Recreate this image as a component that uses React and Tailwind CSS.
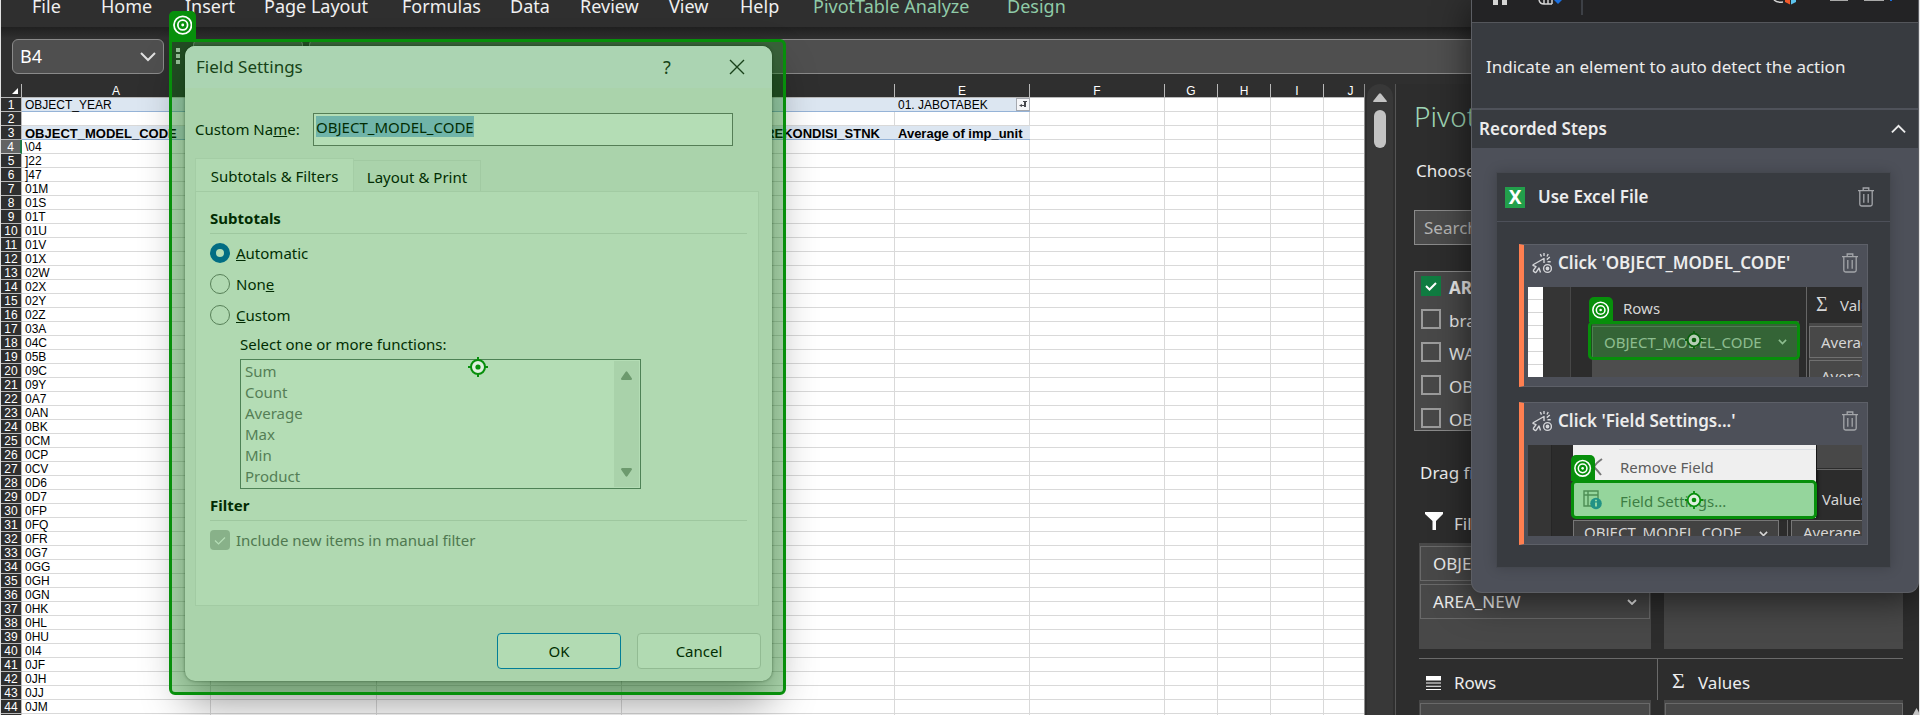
import React from "react";

const tabs = [
  ["File", false],
  ["Home", false],
  ["Insert", false],
  ["Page Layout", false],
  ["Formulas", false],
  ["Data", false],
  ["Review", false],
  ["View", false],
  ["Help", false],
  ["PivotTable Analyze", true],
  ["Design", true],
];

const codes = [
  "\\04", "]22", "]47", "01M", "01S", "01T", "01U", "01V", "01X", "02W", "02X", "02Y", "02Z",
  "03A", "04C", "05B", "09C", "09Y", "0A7", "0AN", "0BK", "0CM", "0CP", "0CV", "0D6", "0D7",
  "0FP", "0FQ", "0FR", "0G7", "0GG", "0GH", "0GN", "0HK", "0HL", "0HU", "0I4", "0JF", "0JH",
  "0JJ", "0JM", "0JN",
];

const functionNames = ["Sum", "Count", "Average", "Max", "Min", "Product"];
const columns = ["A", "B", "C", "D", "E", "F", "G", "H", "I", "J"];

function Chevron({ className, up }) {
  return (
    <svg className={className} viewBox="0 0 16 10" fill="none" stroke="currentColor" strokeWidth="2">
      <path d={up ? "M1 9 8 2l7 7" : "M1 1l7 7 7-7"} />
    </svg>
  );
}

function SmallChevron({ className }) {
  return (
    <svg className={className} viewBox="0 0 10 6" fill="none" stroke="currentColor" strokeWidth="1.8">
      <path d="m1 1 4 4 4-4" />
    </svg>
  );
}

function Badge({ className }) {
  return (
    <div className={"flex items-center justify-center bg-[#078f0b] " + className}>
      <svg viewBox="0 0 20 20" className="size-[72%]" fill="none" stroke="#fff" strokeWidth="1.8">
        <circle cx="10" cy="10" r="9" />
        <circle cx="10" cy="10" r="5" />
        <circle cx="10" cy="10" r="1.5" fill="#fff" stroke="none" />
      </svg>
    </div>
  );
}

function Target({ className, ring = "#078f0b", fill = "#dff0df" }) {
  return (
    <svg viewBox="0 0 20 20" className={className}>
      <circle cx="10" cy="10" r="7" fill={fill} stroke={ring} strokeWidth="2" />
      <path d="M10 0v3M10 17v3M0 10h3M17 10h3" stroke={ring} strokeWidth="2" />
      <circle cx="10" cy="10" r="2.6" fill={ring} />
    </svg>
  );
}

function Trash() {
  return (
    <svg viewBox="0 0 16 20" className="h-5 w-4" fill="none" stroke="#a3a5a9" strokeWidth="1.3">
      <path d="M0 3.7h16M5.2 3.5V1h5.6v2.5M1.8 3.8v13.4q0 1.8 1.8 1.8h8.8q1.8 0 1.8-1.8V3.8M5.8 7v8.8M10.2 7v8.8" />
    </svg>
  );
}

function ClickIcon() {
  return (
    <svg viewBox="0 0 20 22" className="h-[22px] w-5 shrink-0" fill="none" stroke="#d4d5d8" strokeWidth="1.4">
      <path d="M12 11V6.500L1.500 12.500q-1 .8 0 1.200l2.500 1-2.500 3.500q-.4 1 .5 1.500l1 .6q.8.4 1.400-.5L7 16l1.500 4.500" strokeLinejoin="round" />
      <path d="M12 1v3M8.300 2l1.200 2.600M16.200 2 15 4.500M14.800 7.600l3-2.600M15.500 9.800h3.200" />
      <circle cx="15.500" cy="16.500" r="3.900" />
      <circle cx="15.500" cy="16.500" r="1.200" fill="#d4d5d8" />
    </svg>
  );
}

function Sheet() {
  const line = "border-r border-b border-[#d9d9d9] p-0 pt-[2px]";
  const pivot = "border-b border-[#95b3d7] bg-[#dce6f1] p-0 pt-[2px]";
  const head = (n) =>
    n === 4
      ? "h-[14px] border-b border-r-2 border-b-[#c6c6c6] border-r-[#1d7a45] bg-[#636363] p-0 pt-[2px] text-center text-white font-normal"
      : "h-[14px] border-b border-r border-[#b9b9b9] bg-[#2f2f2f] p-0 pt-[2px] text-center text-white font-normal";
  const rest = ["F", "G", "H", "I", "J"].map((c) => <td key={c} className={line} />);
  return (
    <table className="w-[1377px] table-fixed border-separate border-spacing-0 bg-white text-left font-['Liberation_Sans'] text-[12px] leading-[11px] whitespace-nowrap text-black">
      <colgroup>
        <col className="w-[21px]" />
        <col className="w-[189px]" />
        <col className="w-[166px]" />
        <col className="w-[245px]" />
        <col className="w-[273px]" />
        <col className="w-[135px]" />
        <col className="w-[135px]" />
        <col className="w-[53px]" />
        <col className="w-[53px]" />
        <col className="w-[53px]" />
        <col className="w-[54px]" />
      </colgroup>
      <thead>
        <tr className="bg-[#2f2f2f] text-white">
          <th className="h-[14px] border-r border-b border-[#b9b9b9] p-0">
            <svg viewBox="0 0 6 6" className="ml-auto mr-[3px] size-[6px]">
              <path d="M6 0v6H0z" fill="#fff" />
            </svg>
          </th>
          {columns.map((c) => (
            <th key={c} className="h-[14px] border-r border-b border-[#b9b9b9] p-0 pt-[2px] text-center font-normal">
              {c}
            </th>
          ))}
        </tr>
      </thead>
      <tbody>
        <tr>
          <th className={head(1)}>1</th>
          <td className={pivot + " pl-[3px]"}>OBJECT_YEAR</td>
          <td className={pivot} />
          <td className={pivot} />
          <td className={pivot} />
          <td className="border-b border-[#95b3d7] bg-[#dce6f1] p-0">
            <div className="flex h-[13px] items-center justify-between pl-[3px]">
              <span className="pt-[2px]">01. JABOTABEK</span>
              <button aria-label="Filter" className="flex h-[13px] w-[14px] items-center justify-center border border-[#a5a9b0] bg-[#f4f5f8]">
                <svg viewBox="0 0 8 7" className="h-[7px] w-2">
                  <path d="M4 0h4v1H7v5H5V5H3v1L0 4.500 3 3v1h2V1H4z" fill="#44464c" />
                </svg>
              </button>
            </div>
          </td>
          {rest}
        </tr>
        <tr>
          <th className={head(2)}>2</th>
          <td className={line} />
          <td className={line} />
          <td className={line} />
          <td className={line} />
          <td className={line} />
          {rest}
        </tr>
        <tr className="text-[13px] font-bold">
          <th className={head(3) + " text-[12px]"}>3</th>
          <td className={pivot + " overflow-visible pl-[3px]"}>OBJECT_MODEL_CODE</td>
          <td className={pivot} />
          <td className={pivot} />
          <td className={pivot + " pr-[15px] text-right"}>REKONDISI_STNK</td>
          <td className={pivot + " pl-[3px]"}>Average of imp_unit</td>
          {rest}
        </tr>
        {codes.map((code, i) => (
          <tr key={code}>
            <th className={head(i + 4)}>{i + 4}</th>
            <td className={line + " pl-[3px]"}>{code}</td>
            <td className={line} />
            <td className={line} />
            <td className={line} />
            <td className={line} />
            {rest}
          </tr>
        ))}
      </tbody>
    </table>
  );
}

function AreaItem({ children }) {
  return (
    <button className="flex h-[35px] w-full shrink-0 items-center justify-between border border-[#696969] bg-[#484848] px-3 text-left">
      {children}
      <SmallChevron className="w-[10px]" />
    </button>
  );
}

function FieldPane() {
  const fields = [
    ["AREA_NEW", true],
    ["branch", false],
    ["WAREHOUSE", false],
    ["OBJECT_YEAR", false],
    ["OBJECT_MODEL", false],
  ];
  return (
    <aside className="flex w-[524px] shrink-0 flex-col overflow-hidden border-l border-[#555] bg-[#2d2d2d] pr-4 pl-[18px] text-[17px] whitespace-nowrap text-[#ececec]">
      <h2 className="mt-[15px] text-[28px] leading-[34px] font-light text-[#9fd5b5]">PivotTable Fields</h2>
      <p className="mt-[26px] pl-[2px] leading-6">Choose fields to add to report:</p>
      <input
        aria-label="Search fields"
        placeholder="Search"
        className="mt-[27px] h-[35px] w-full shrink-0 border border-[#8a8a8a] bg-[#4b4b4b] px-[9px] placeholder:text-[#b5b5b5]"
      />
      <div className="mt-[26px] h-[160px] shrink-0 overflow-hidden border border-[#8a8a8a] bg-[#484848] pl-[6px]">
        {fields.map(([name, on]) => (
          <label key={name} className={"flex h-[33px] items-center gap-2 pb-[6px] " + (on ? "font-bold" : "")}>
            <span className="relative size-5 shrink-0">
              <input
                type="checkbox"
                defaultChecked={on}
                className="block size-5 appearance-none border-2 border-[#9b9b9b] checked:border-[#107c41] checked:bg-[#107c41]"
              />
              {on && (
                <svg viewBox="0 0 20 20" className="absolute inset-0" fill="none" stroke="#fff" strokeWidth="2">
                  <path d="m5 10 3.500 3.500L15 7" />
                </svg>
              )}
            </span>
            <span className="pt-1 leading-6">{name}</span>
          </label>
        ))}
      </div>
      <p className="mt-[30px] pl-[6px] leading-6">Drag fields between areas below:</p>
      <div className="ml-[5px] grid flex-1 grid-cols-[232px_1fr] gap-x-[13px]">
        <h3 className="mt-[27px] flex h-[31px] items-start pl-[6px] leading-6">
          <svg viewBox="0 0 18 18" className="mr-[11px] size-[18px] shrink-0">
            <path d="M0 0h18v2l-7 7v9H7.500V9L0 2z" fill="#fff" />
          </svg>
          Filters
        </h3>
        <h3 className="mt-[27px] pl-[34px] leading-6">Columns</h3>
        <div className="flex h-[106px] flex-col gap-[3px] bg-[#484848] px-[1px] pt-[3px]">
          <AreaItem>OBJECT_YEAR</AreaItem>
          <AreaItem>AREA_NEW</AreaItem>
        </div>
        <div className="bg-[#484848]" />
        <h3 className="mt-[9px] -mr-[7px] flex h-[42px] items-center border-t border-r border-[#6a6a6a] pt-[6px] pl-[7px]">
          <svg viewBox="0 0 15 14" className="mr-[13px] h-[14px] w-[15px] shrink-0" fill="#fff">
            <path d="M0 0h15v4.500H0zM0 6.500h15v1H0zM0 9.700h15v1H0zM0 13h15v1H0z" />
          </svg>
          Rows
        </h3>
        <h3 className="mt-[9px] -ml-[6px] flex h-[42px] items-center border-t border-[#6a6a6a] pt-[6px] pl-[14px]">
          <span className="w-[26px] pb-1 font-['Liberation_Serif'] text-[22px]">Σ</span>
          Values
        </h3>
        <div className="bg-[#484848] px-[1px] pt-[3px]">
          <AreaItem>OBJECT_MODEL_CODE</AreaItem>
        </div>
        <div className="flex items-start bg-[#484848] pt-[3px] pl-[1px]">
          <AreaItem>Average of COLD_O</AreaItem>
          <svg viewBox="0 0 27 12" className="mt-[5px] h-3 w-[27px] shrink-0">
            <path d="M7 12 13.500 0 20 12z" fill="#c4c4c4" />
          </svg>
        </div>
      </div>
    </aside>
  );
}

function Heading({ children }) {
  return <h3 className="border-b border-[#e0e0e0] pb-1 leading-[22px] font-bold">{children}</h3>;
}

function FieldSettings() {
  const radio =
    "size-5 shrink-0 appearance-none rounded-full border border-[#7b7b7b] checked:border-[6px] checked:border-[#005fb8] checked:bg-white";
  return (
    <section
      role="dialog"
      aria-label="Field Settings"
      className="absolute top-[46px] left-[184px] flex w-[587px] flex-col rounded-[10px] bg-[#f1f1f1] pr-[11px] pb-3 pl-[10px] text-[15px] leading-[22px] whitespace-nowrap text-black shadow-[0_0_3px_rgba(0,0,0,0.5),0_20px_44px_rgba(0,0,0,0.42)]"
    >
      <header className="-mr-[11px] -ml-[10px] flex h-[42px] items-center rounded-t-[10px] bg-[#f3f3fb] pl-[11px] text-[17px] text-[#222]">
        <h2 className="flex-1">Field Settings</h2>
        <button aria-label="Help" className="w-9 text-center text-[18px]">?</button>
        <button aria-label="Close" className="mr-[27px] ml-[44px] p-0">
          <svg viewBox="0 0 16 16" className="size-4" fill="none" stroke="#222" strokeWidth="1.4">
            <path d="m1 1 14 14M15 1 1 15" />
          </svg>
        </button>
      </header>
      <div className="mt-[25px] flex items-start">
        <label htmlFor="custom-name" className="w-[118px] pt-[5px]">
          Custom Na<u>m</u>e:
        </label>
        <div className="flex h-[33px] w-[420px] items-start border border-[#777] bg-white p-[2px]">
          <input
            id="custom-name"
            defaultValue="OBJECT_MODEL_CODE"
            className="field-sizing-content h-[21px] bg-[#9ec4ee]"
          />
        </div>
      </div>
      <div className="mt-3 flex items-end" role="tablist">
        <button role="tab" aria-selected="true" className="-mb-[1px] h-[34px] w-[159px] border border-b-0 border-[#e8e8e8] bg-[#f9f9f9]">
          Subtotals &amp; Filters
        </button>
        <button role="tab" aria-selected="false" className="h-[31px] w-[127px] border border-b-0 border-l-0 border-[#e4e4e4] pt-[2px]">
          Layout &amp; Print
        </button>
      </div>
      <div className="mr-[2px] h-[415px] border border-[#e6e6e6] bg-[#f9f9f9] pt-[15px] pr-[11px] pl-[14px]">
        <Heading>Subtotals</Heading>
        <div className="pt-[3px]">
          <label className="flex h-[31px] items-center gap-[6px]">
            <input type="radio" name="subtotal" defaultChecked className={radio} />
            <span><u>A</u>utomatic</span>
          </label>
          <label className="flex h-[31px] items-center gap-[6px]">
            <input type="radio" name="subtotal" className={radio} />
            <span>Non<u>e</u></span>
          </label>
          <label className="flex h-[31px] items-center gap-[6px]">
            <input type="radio" name="subtotal" className={radio} />
            <span><u>C</u>ustom</span>
          </label>
        </div>
        <div className="mt-[3px] mb-[5px] ml-[30px]">
          <label htmlFor="functions">Select one or more functions:</label>
          <div className="mt-1 flex h-[130px] w-[401px] border border-[#6d7d78] bg-white p-[1px]">
            <select
              id="functions"
              multiple
              disabled
              size={6}
              className="h-[126px] flex-1 overflow-hidden bg-white text-[#777] opacity-100 [scrollbar-width:none]"
            >
              {functionNames.map((name) => (
                <option key={name} className="h-[21px] min-h-[21px] p-0 pl-[3px] leading-[22px] text-[#777]">
                  {name}
                </option>
              ))}
            </select>
            <div className="flex w-[25px] flex-col items-center justify-between bg-[#f0f0f0] py-[10px]">
              <svg viewBox="0 0 11 9" className="h-[9px] w-[11px]">
                <path d="M4.500 1q1-1.600 2 0L11 7.500Q11 9 10 9H1Q0 9 0 7.500z" fill="#9a9f9a" />
              </svg>
              <svg viewBox="0 0 11 9" className="h-[9px] w-[11px]">
                <path d="M4.500 8q1 1.600 2 0L11 1.500Q11 0 10 0H1Q0 0 0 1.500z" fill="#9a9f9a" />
              </svg>
            </div>
          </div>
        </div>
        <Heading>Filter</Heading>
        <label className="mt-[3px] flex h-[31px] items-center gap-[6px] text-[#6f6f6f]">
          <span className="relative size-5 shrink-0">
            <input type="checkbox" defaultChecked disabled className="block size-5 appearance-none rounded-[4px] bg-[#c0c0c0]" />
            <svg viewBox="0 0 20 20" className="absolute inset-0" fill="none" stroke="#fff" strokeWidth="1.200">
              <path d="m5 10.500 3.500 3.500L15 7.500" />
            </svg>
          </span>
          Include new items in manual filter
        </label>
      </div>
      <footer className="mt-[27px] flex justify-end gap-4">
        <button className="h-9 w-[124px] rounded-[4px] border border-[#0078d4] bg-[#fdfdfd]">OK</button>
        <button className="h-9 w-[124px] rounded-[4px] border border-[#cfcfcf] bg-[#fbfbfb]">Cancel</button>
      </footer>
    </section>
  );
}

function StepCard({ title, children }) {
  return (
    <article className="h-[143px] border border-l-[5px] border-[#5d6068] border-l-[#ff7f50] bg-[#4d5059] pr-[5px] pl-1">
      <header className="flex h-[42px] items-center pr-1 pb-[6px] pl-1">
        <ClickIcon />
        <h4 className="ml-[6px] flex-1 font-semibold">{title}</h4>
        <button aria-label={"Delete " + title}><Trash /></button>
      </header>
      {children}
    </article>
  );
}

function RowsPreview() {
  return (
    <div className="relative flex h-[90px] overflow-hidden bg-[#2c2c2c] text-[15px] leading-[18px] whitespace-nowrap text-[#d6d6d6]">
      <div className="w-[15px] shrink-0 bg-white bg-[repeating-linear-gradient(to_bottom,transparent_0_12px,#d5d5d5_12px_13px)]" />
      <div className="w-[28px] shrink-0 border-r border-[#474747] bg-[#353535]" />
      <div className="ml-[17px] w-[218px] shrink-0">
        <p className="pt-3 pl-[35px]">Rows</p>
        <div className="mt-1 ml-1 h-[56px] w-[207px] bg-[#4d4d4d] pt-[5px]">
          <div className="flex h-[32px] items-center justify-between border border-[#777] px-[11px]">
            OBJECT_MODEL_CODE
            <SmallChevron className="w-[9px]" />
          </div>
        </div>
      </div>
      <div className="w-20 shrink-0 border-l border-[#666]">
        <p className="flex h-9 items-center pl-[9px]">
          <span className="w-6 pb-[2px] font-['Liberation_Serif'] text-[20px]">Σ</span>Values
        </p>
        <div className="ml-[2px] flex flex-col gap-[2px] bg-[#484848] pt-[3px]">
          <div className="h-[32px] border border-[#707070] pt-[6px] pl-[11px]">Average</div>
          <div className="h-[32px] border border-[#707070] pt-[6px] pl-[11px]">Average</div>
        </div>
      </div>
      <Badge className="absolute top-[10px] left-[61px] h-[25px] w-6 rounded-t-[5px]" />
      <div className="absolute top-[34px] left-[60px] h-[39px] w-[212px] rounded-[5px] border-[3px] border-[#078f0b] bg-[#078f0b]/35" />
      <Target className="absolute top-[44px] left-[157px] size-[18px]" ring="#0a5f0e" fill="#b5cdb5" />
    </div>
  );
}

function MenuPreview() {
  return (
    <div className="relative flex h-[91px] overflow-hidden bg-[#2c2c2c] text-[15px] leading-[18px] whitespace-nowrap text-[#d6d6d6]">
      <div className="w-6 shrink-0 border-r border-[#262626] bg-[#353535]" />
      <div className="ml-[21px] w-[244px] shrink-0">
        <div className="h-[73px] w-[243px] bg-[#efefef] text-[#5c5c5c] shadow-[2px_0_3px_rgba(0,0,0,0.6)]">
          <div className="ml-[46px] border-b border-[#dcdfe3] pt-1" />
          <p className="pt-2 pl-[47px]">Remove Field</p>
          <p className="pt-4 pl-[47px]">Field Settings...</p>
        </div>
        <div className="mt-[2px] flex h-[32px] w-[206px] items-start justify-between border border-[#777] bg-[#424242] px-[10px] pt-[2px]">
          OBJECT_MODEL_CODE
          <SmallChevron className="mt-2 w-[9px]" />
        </div>
      </div>
      <div className="flex-1">
        <div className="h-6 border-b border-[#2c2c2c] bg-[#484848]" />
        <div className="h-[52px] border-t border-[#666] pt-[20px] pl-[5px]">Values</div>
      </div>
      <div className="absolute top-[75px] left-[259px] h-8 w-20 border-l border-[#666] pl-[3px]">
        <div className="h-8 border border-[#777] bg-[#424242] pt-[2px] pl-[11px]">Average</div>
      </div>
      <svg viewBox="0 0 10 18" className="absolute top-[13px] left-[65px] h-[18px] w-[10px]" fill="none" stroke="#777" strokeWidth="2">
        <path d="M9 1Q3 5 1 9q4 4 7 8" />
      </svg>
      <svg viewBox="0 0 19 20" className="absolute top-[45px] left-[55px] h-5 w-[19px]">
        <path d="M1 1h14v15H1zM1 5h14M5 1v15" fill="none" stroke="#777" strokeWidth="1.400" />
        <circle cx="13" cy="13.500" r="5.800" fill="#2f7fc8" />
        <path d="M13 12.500v4M13 9.700v1.600" stroke="#fff" strokeWidth="1.800" />
      </svg>
      <Badge className="absolute top-[10px] left-[43px] h-[26px] w-6 rounded-t-[5px]" />
      <div className="absolute top-[35px] left-[43px] h-[39px] w-[246px] rounded-[5px] border-[3px] border-[#078f0b] bg-[#10b020]/40" />
      <Target className="absolute top-[46px] left-[157px] size-[18px]" />
    </div>
  );
}

function Recorder() {
  return (
    <section
      aria-label="Recorder"
      className="absolute top-0 right-0 flex w-[448px] flex-col rounded-b-[11px] border border-t-0 border-[#5c5e64] bg-[#4d5059] text-[17px] leading-6 whitespace-nowrap text-[#ececec] shadow-[0_6px_36px_rgba(0,0,0,0.6)]"
    >
      <div className="flex h-[23px] items-start border-b border-[#54565b] bg-[#232325] pl-[21px]">
        <svg viewBox="0 0 14 5" className="h-[5px] w-[14px]">
          <path d="M0 0h5v5H0zM9 0h5v5H9z" fill="#d4d4d4" />
        </svg>
        <svg viewBox="0 0 26 6" className="ml-[31px] h-[6px] w-[26px]">
          <path d="M1 0q1 4 5 4h8M6 0v4M10 0v4M14 0v4" fill="none" stroke="#d4d4d4" strokeWidth="1.500" />
          <path d="M16 0h8l-4 4z" fill="#1a6fe0" />
        </svg>
        <div className="ml-[17px] h-[15px] w-[2px] bg-[#3d4046]" />
        <svg viewBox="0 0 24 5" className="ml-auto h-[5px] w-6">
          <path d="M1 0q3 3 9 2" fill="none" stroke="#d4d4d4" strokeWidth="1.500" />
          <path d="M12 0h5v4.500L12 2z" fill="#f0592a" />
          <path d="M18 0h5v2l-5 2.500z" fill="#5cc3ee" />
        </svg>
        <svg viewBox="0 0 62 2" className="mr-[26px] ml-[33px] h-[2px] w-[62px]">
          <path d="M0 0h18v1H0zM34 0h20v1H34z" fill="#a9a9a9" />
          <path d="M60 0h2v1h-2z" fill="#1a6fe0" />
        </svg>
      </div>
      <p className="flex h-[87px] items-center border-b-2 border-[#4f525a] bg-[#383b40] pt-[2px] pl-[14px]">
        Indicate an element to auto detect the action
      </p>
      <h3 className="flex h-[38px] items-center justify-between bg-[#383b40] pr-3 pl-[7px] font-semibold">
        Recorded Steps
        <button aria-label="Collapse"><Chevron up className="w-[15px]" /></button>
      </h3>
      <div className="pt-6 pr-[27px] pb-6 pl-6">
        <article className="border border-[#45484f] bg-[#383b40] shadow-[0_0_12px_rgba(0,0,0,0.18)]">
          <header className="flex h-[49px] items-center border-b border-[#4d5059] pr-4 pl-2">
            <span className="flex h-[21px] w-5 items-center justify-center bg-[#229f4b] text-[19px] leading-[21px] font-bold text-white">X</span>
            <h4 className="ml-[13px] flex-1 font-semibold">Use Excel File</h4>
            <button aria-label="Delete Use Excel File"><Trash /></button>
          </header>
          <div className="flex flex-col gap-[15px] px-[22px] pt-[22px] pb-[22px]">
            <StepCard title="Click 'OBJECT_MODEL_CODE'"><RowsPreview /></StepCard>
            <StepCard title="Click 'Field Settings...'"><MenuPreview /></StepCard>
          </div>
        </article>
      </div>
    </section>
  );
}

export default function App() {
  return (
    <div className="relative flex h-screen flex-col overflow-hidden border-x border-[#e3e3e3] bg-[#2f2f2f] font-['Noto_Sans',sans-serif]">
      <nav className="grid h-[27px] shrink-0 grid-cols-[69px_84px_79px_138px_108px_70px_89px_71px_73px_194px_auto] items-start justify-start bg-[#2f2f2f] pl-[31px] text-[18px] leading-3 whitespace-nowrap text-[#f0f0f0]">
        {tabs.map(([name, accent]) => (
          <a key={name} href="#" className={accent ? "text-[#8fcba8]" : ""}>{name}</a>
        ))}
      </nav>
      <div className="flex h-[57px] shrink-0 items-start gap-[6px] bg-linear-to-b from-[#202020] to-[#2f2f2f] to-20% pt-3 pl-[11px]">
        <div className="flex h-[35px] w-[152px] shrink-0 items-center rounded-[6px] border border-[#8a8a8a] bg-[#4f4f4f] px-[7px]">
          <input aria-label="Name box" defaultValue="B4" className="w-full min-w-0 text-[18px] text-white" />
          <button aria-label="Open name list" className="text-[#e0e0e0]"><Chevron className="w-4" /></button>
        </div>
        <svg viewBox="0 0 4 16" className="mt-[9px] ml-[6px] h-4 w-1 shrink-0" fill="#d8d8d8">
          <path d="M0 0h4v4H0zM0 6h4v4H0zM0 12h4v4H0z" />
        </svg>
        <div className="ml-[7px] h-[35px] w-[110px] shrink-0 rounded-[6px] border border-[#8a8a8a] bg-[#4f4f4f]" />
        <input aria-label="Formula bar" className="h-[35px] flex-1 rounded-l-[6px] border border-[#8a8a8a] bg-[#4f4f4f] px-2 text-white" />
      </div>
      <div className="flex min-h-0 flex-1">
        <div className="min-w-0 flex-1 overflow-hidden">
          <Sheet />
        </div>
        <div className="flex w-[31px] shrink-0 justify-center border-l border-[#8f8f8f]">
          <div className="flex w-[26px] flex-col items-center rounded-t-full bg-[#383838] pt-[9px]">
            <svg viewBox="0 0 14 9" className="h-[9px] w-[14px]">
              <path d="M6 .8q1-1.200 2 0l6 7.400q0 .8-1 .8H1q-1 0-1-.8z" fill="#c4c4c4" />
            </svg>
            <div className="mt-2 h-[38px] w-3 rounded-full bg-[#c4c4c4]" />
          </div>
        </div>
        <FieldPane />
      </div>
      <FieldSettings />
      <div className="pointer-events-none absolute top-[11px] left-[168px] w-[617px]">
        <Badge className="h-7 w-[27px] rounded-t-[5px]" />
        <div className="relative flex h-[656px] items-center justify-center rounded-[6px] rounded-tl-none border-[3px] border-[#078f0b] bg-[#078f0b]/30">
          <Target className="size-5" />
        </div>
      </div>
      <Recorder />
    </div>
  );
}
